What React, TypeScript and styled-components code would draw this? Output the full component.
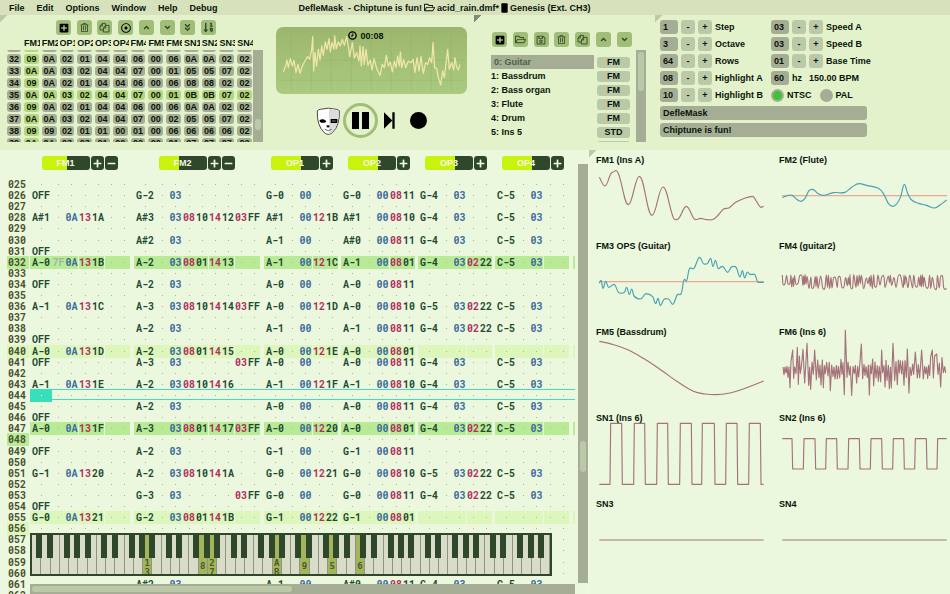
import React from "react";
import styled, { createGlobalStyle, css } from "styled-components";
import {
  FaPlusSquare,
  FaRegTrashAlt,
  FaRegDotCircle,
  FaAngleUp,
  FaAngleDown,
  FaAngleDoubleDown,
  FaSortNumericDown,
  FaRegFolderOpen,
  FaRegSave,
  FaPlus,
  FaMinus,
} from "react-icons/fa";

const c = {
  bar: "#d7e2bd",
  panel: "#e3f2ca",
  pattern: "#ebf8dd",
  btn: "#a1be78",
  field: "#a5ae94",
  soft: "#bcc9a9",
  ink: "#0a140a",
  dark: "#2f482c",
  note: "#1c4a34",
  inst: "#3a6a9c",
  fx: "#b02e60",
  label: "#48502f",
  dot: "#a5b593",
  cursor: "#3fdcc0",
};

const Global = createGlobalStyle`
  * { box-sizing: border-box; }
  body { margin: 0; background: ${c.pattern}; }
  body, button, input {
    font: bold 9px/12px "Liberation Sans", Arial, sans-serif;
    color: ${c.ink};
  }
  button { border: 0; padding: 0; background: none; }
`;

const Shell = styled.div`
  display: flex;
  flex-direction: column;
  height: 100vh;
  overflow: hidden;
`;

/* ---------- menu bar ---------- */

const MenuBar = styled.header`
  display: flex;
  align-items: center;
  flex: none;
  height: 15px;
  padding-left: 9px;
  background: ${c.bar};
  white-space: pre;
`;

const Menu = styled.nav`
  display: flex;
  gap: 12px;
`;

const Title = styled.div`
  display: flex;
  align-items: center;
  gap: 2px;
  margin-left: 81px;
`;

/* ---------- top panels ---------- */

const TopRow = styled.div`
  display: grid;
  grid-template-columns: 265fr 209fr 181fr 295fr;
  flex: none;
  min-height: 135px;
  background: ${c.panel};
`;

const corner = css<{ $corner?: string }>`
  ${(p) =>
    p.$corner &&
    `background: linear-gradient(135deg, ${p.$corner} 50%, transparent 51%) 0 0 / 7px 7px no-repeat;`}
`;

const Panel = styled.section`
  min-width: 0;
  ${corner}
`;

const Tools = styled.div`
  display: flex;
  justify-content: space-between;
`;

const ToolButton = styled.button`
  display: flex;
  align-items: center;
  justify-content: center;
  width: 15px;
  height: 15px;
  border-radius: 3px;
  background: ${c.btn};
  color: #34492a;
  font-size: 9px;
  &:first-child { color: #000; }
`;

const OrderTools = styled(Tools)`
  width: 160px;
  margin: 5px 0 0 56px;
`;

const Orders = styled.div`
  display: flex;
  gap: 1px;
  padding: 0 2px 0 7px;
`;

const OrderTable = styled.table`
  display: block;
  flex: 1;
  min-width: 0;
`;

const OrderHead = styled.thead`
  display: block;
  padding-top: 2px;
  height: 15px;
`;

const OrderBody = styled.tbody`
  display: block;
  height: 92px;
  overflow: hidden;
  & > tr:first-child { margin-top: -8px; }
`;

const OrderRow = styled.tr`
  display: grid;
  grid-template-columns: 14px repeat(13, minmax(0, 1fr));
  gap: 3px;
  margin-bottom: 2px;
`;

const OrderTitle = styled.th`
  padding: 0;
  margin-right: -1px;
  overflow: hidden;
  text-align: left;
`;

const OrderCell = styled.td<{ $on?: boolean }>`
  padding: 0;
  height: 10px;
  border-radius: 3px;
  line-height: 10px;
  text-align: center;
  background: ${(p) => (p.$on ? "#b3d67c" : c.field)};
`;

const VScroll = styled.div<{ $start: number; $size: number }>`
  flex: none;
  width: 10px;
  background: ${c.field};
  padding: 2px;
  &::before {
    content: "";
    display: block;
    height: ${(p) => p.$size}px;
    margin-top: ${(p) => p.$start}px;
    border-radius: 3px;
    background: ${c.soft};
  }
`;

const OrderScroll = styled(VScroll)`
  margin-top: 15px;
`;

/* ---------- transport ---------- */

const TransportPanel = styled(Panel)`
  padding: 12px 7px 0 11px;
`;

const Display = styled.div`
  display: grid;
  height: 67px;
  border-radius: 7px;
  background: linear-gradient(#9cb76d, #a9ca80);
  & > * { grid-area: 1 / 1; }
`;

const Clock = styled.div`
  display: flex;
  gap: 3px;
  justify-self: center;
  align-items: center;
  height: 17px;
  margin-right: 11px;
`;

const WaveSvg = styled.svg`
  width: 100%;
  height: 100%;
`;

const Transport = styled.div`
  display: flex;
  align-items: center;
  height: 35px;
  margin: 9px 0 0 40px;
`;

const TransportButton = styled.button<{ $gap?: number }>`
  display: flex;
  margin-left: ${(p) => p.$gap || 0}px;
`;

const PauseButton = styled(TransportButton)`
  align-items: center;
  justify-content: center;
  gap: 3px;
  width: 35px;
  height: 35px;
  border: 3px solid ${c.btn};
  border-radius: 50%;
  &::before, &::after {
    content: "";
    width: 7px;
    height: 17px;
    background: #000;
  }
`;

const RecordButton = styled(TransportButton)`
  width: 17px;
  height: 17px;
  border-radius: 50%;
  background: #000;
`;

/* ---------- instruments ---------- */

const InstrumentTools = styled(Tools)`
  width: 140px;
  margin: 17px 0 0 18px;
`;

const Instruments = styled.div`
  display: flex;
  gap: 6px;
  height: 92px;
  margin: 3px 9px 0 17px;
`;

const InstrumentList = styled.ul`
  flex: 1;
  margin: 0;
  padding: 5px 0 0;
  list-style: none;
  overflow: hidden;
`;

const InstrumentRow = styled.li`
  display: flex;
  align-items: center;
  gap: 3px;
  height: 14px;
`;

const InstrumentName = styled.button<{ $on?: boolean }>`
  flex: 1;
  height: 14px;
  text-align: left;
  ${(p) => p.$on && `padding-left: 3px; background: ${c.field}; color: #4a6148;`}
`;

const KindButton = styled.button`
  width: 33px;
  height: 11px;
  border-radius: 3px;
  line-height: 11px;
  background: ${c.soft};
`;

/* ---------- settings ---------- */

const Settings = styled(Panel)`
  padding: 5px 0 0 5px;
`;

const SettingsGrid = styled.div`
  display: grid;
  grid-template-columns: 108px 110px;
  gap: 3px;
`;

const Setting = styled.div`
  display: flex;
  align-items: center;
  gap: 3px;
  white-space: nowrap;
`;

const Field = styled.input`
  width: 18px;
  height: 14px;
  padding: 0 0 0 3px;
  border: 0;
  border-radius: 3px;
  background: ${c.field};
`;

const StepButton = styled.button`
  width: 14px;
  height: 14px;
  border-radius: 3px;
  background: ${c.soft};
`;

const Bpm = styled.output`
  margin-left: 4px;
`;

const Radio = styled.input`
  appearance: none;
  width: 13px;
  height: 13px;
  margin: 0;
  border: 2px solid ${c.field};
  border-radius: 50%;
  background: ${c.field};
  &:checked { background: #3fc33d; }
  label + & { margin-left: 5px; }
`;

const SongField = styled(Field)`
  display: block;
  width: 207px;
  margin-top: 3px;
  &:first-of-type { margin-top: 4px; }
`;

/* ---------- pattern editor ---------- */

const Bottom = styled.div`
  display: flex;
  flex: 1;
  min-height: 0;
`;

const PatternPane = styled.main`
  display: flex;
  flex: 0 0 62%;
  min-width: 0;
  border-right: 1px solid #f3fae8;
`;

const PatternMain = styled.div`
  position: relative;
  display: flex;
  flex-direction: column;
  flex: 1;
  min-width: 0;
  overflow: hidden;
`;

const columns = "30px 104px 130px repeat(4, 77px) 77px";

const ChannelBar = styled.div`
  display: grid;
  grid-template-columns: ${columns};
  flex: none;
  height: 28px;
  padding-top: 6px;
`;

const ChannelHead = styled.div<{ $wide?: boolean }>`
  display: flex;
  justify-content: center;
  gap: 1px;
  padding-right: ${(p) => (p.$wide ? 5 : 1)}px;
`;

const ChannelName = styled.button<{ $level: number }>`
  width: 48px;
  height: 14px;
  border-radius: 3px;
  color: #f4fbe6;
  background: linear-gradient(90deg, #c9f20c ${(p) => p.$level}%, ${c.dark} ${(p) => p.$level}%);
`;

const ChannelButton = styled.button`
  display: flex;
  align-items: center;
  justify-content: center;
  width: 13px;
  height: 14px;
  border-radius: 3px;
  font-size: 9px;
  color: #f4fbe6;
  background: ${c.dark};
`;

const PatternTable = styled.table`
  display: block;
  flex: 1;
  min-height: 0;
  margin-bottom: -6px;
  font: bold 10px/13px "Roboto Mono", "DejaVu Sans Mono", monospace;
`;

const PatternBody = styled.tbody`
  display: grid;
  grid-template-rows: repeat(38, minmax(0, 1fr));
  height: 100%;
`;

type Hl = 0 | 1 | 2;
const hlColor = ["transparent", "#dcf6bc", "#b9ea95"];

const PatternRow = styled.tr<{ $cursor?: boolean }>`
  display: grid;
  grid-template-columns: ${columns};
  ${(p) =>
    p.$cursor &&
    `background: linear-gradient(90deg, ${c.pattern} 30px, transparent 30px), linear-gradient(${c.cursor} 1px, transparent 1px, transparent calc(100% - 1px), ${c.cursor} calc(100% - 1px));`}
`;

const RowLabel = styled.th<{ $hl: Hl }>`
  padding: 0 0 0 1px;
  margin: 0 1px 0 7px;
  text-align: left;
  color: ${c.label};
  background: ${(p) => hlColor[p.$hl]};
`;

const Channel = styled.td`
  display: flex;
  padding: 0;
`;

const Cell = styled.span<{ $w: number; $hl: Hl; $color?: string; $gap?: boolean; $on?: boolean }>`
  flex: none;
  width: ${(p) => p.$w}px;
  display: flex;
  justify-content: center;
  color: ${(p) => p.$color || c.note};
  background: ${(p) => (p.$on ? "#37dfba" : hlColor[p.$hl])};
  ${(p) => p.$gap && p.$hl > 0 && `box-shadow: inset 1px 0 ${c.pattern};`}
`;

const Dot = styled.i<{ $light?: boolean }>`
  width: 1px;
  height: 1px;
  margin-top: 6px;
  background: ${(p) => (p.$light ? "#d9fff2" : c.dot)};
`;

const Piano = styled.div`
  position: absolute;
  left: 30px;
  right: 23px;
  bottom: 18px;
  display: flex;
  height: 43px;
  border: 2px solid ${c.dark};
  background: #d8dcc8;
  overflow: hidden;
`;

const WhiteKey = styled.div<{ $lit?: boolean; $black?: number; $single?: boolean }>`
  position: relative;
  flex: 1;
  min-width: 0;
  display: flex;
  flex-direction: column;
  align-items: center;
  padding-top: ${(p) => (p.$single ? 27 : 24)}px;
  border-right: 1px solid #8d967e;
  background: ${(p) => (p.$lit ? "#a3b55a" : "#d8dcc8")};
  color: #4a5a34;
  font: bold 9px/9px "DejaVu Sans Mono", monospace;
  ${(p) =>
    p.$black &&
    `&::after {
      content: "";
      position: absolute;
      z-index: 1;
      top: 0;
      left: ${p.$black}%;
      width: 6px;
      height: 23px;
      margin-left: -3px;
      background: ${c.dark};
    }`}
`;

const HScroll = styled.div`
  position: absolute;
  left: 30px;
  right: 0;
  bottom: 0;
  height: 10px;
  padding: 2px;
  background: ${c.field};
  &::before {
    content: "";
    display: block;
    width: 48%;
    height: 6px;
    border-radius: 3px;
    background: ${c.soft};
  }
`;

const PatternScroll = styled(VScroll)`
  margin: 14px 0 11px 3px;
`;

/* ---------- scopes ---------- */

const Scopes = styled.aside`
  flex: 1;
  min-width: 0;
  display: grid;
  grid-template-columns: 1fr 1fr;
  grid-auto-rows: 86px;
  column-gap: 15px;
  padding: 2px 3px 0 7px;
  ${corner}
`;

const Scope = styled.figure`
  display: grid;
  margin: 0;
  min-width: 0;
  & > * { grid-area: 1 / 1; }
`;

const ScopeTitle = styled.figcaption`
  padding-top: 2px;
`;

const ScopeSvg = styled.svg`
  width: calc(100% - 3px);
  height: 86px;
  margin-left: 3px;
  overflow: visible;
`;

/* ---------- data ---------- */

const menus = ["File", "Edit", "Options", "Window", "Help", "Debug"];
const orderNames = ["FM1", "FM2", "OP1", "OP2", "OP3", "OP4", "FM4", "FM5", "FM6", "SN1", "SN2", "SN3", "SN4"];
const orders: [string, string][] = [
  ["31", "0A 0A 03 02 04 04 07 00 02 05 05 07 02"],
  ["32", "09 0A 02 01 04 04 06 00 06 0A 0A 02 02"],
  ["33", "0A 0A 03 02 04 04 07 00 01 05 05 07 02"],
  ["34", "09 0A 02 01 04 04 06 00 06 08 08 02 02"],
  ["35", "0A 0A 03 02 04 04 07 00 01 0B 0B 07 02"],
  ["36", "09 0A 02 01 04 04 06 00 06 0A 0A 02 02"],
  ["37", "0A 0A 03 02 04 04 07 00 02 05 05 07 02"],
  ["38", "09 09 02 01 01 00 01 00 06 06 06 06 02"],
  ["39", "0A 0A 03 03 01 00 02 00 01 07 07 07 02"],
];

const instruments = [
  ["0: Guitar", "FM"],
  ["1: Bassdrum", "FM"],
  ["2: Bass organ", "FM"],
  ["3: Flute", "FM"],
  ["4: Drum", "FM"],
  ["5: Ins 5", "STD"],
  ["6: Ins 6", "STD"],
];

const channels = [
  { name: "FM1", fx: 2, level: 53, minus: true },
  { name: "FM2", fx: 3, level: 41, minus: true },
  { name: "OP1", fx: 1, level: 63 },
  { name: "OP2", fx: 1, level: 62 },
  { name: "OP3", fx: 1, level: 62 },
  { name: "OP4", fx: 1, level: 62 },
];

/* Cell text: note, volume, instrument, then one four-digit effect per slot; "." is empty. */
const rows: Record<number, string> = {
  26: "OFF|G-2 . 03|G-0 . 00|G-0 . 00 0811|G-4 . 03|C-5 . 03",
  28: "A#1 . 0A 131A|A#3 . 03 0810 1412 03FF|A#1 . 00 121B|A#1 . 00 0810|G-4 . 03|C-5 . 03",
  30: "|A#2 . 03|A-1 . 00|A#0 . 00 0811|G-4 . 03|C-5 . 03",
  31: "OFF",
  32: "A-0 7F 0A 131B|A-2 . 03 0801 1413|A-1 . 00 121C|A-1 . 00 0801|G-4 . 03 0222|C-5 . 03",
  34: "OFF|A-2 . 03|A-0 . 00|A-0 . 00 0811",
  36: "A-1 . 0A 131C|A-3 . 03 0810 1414 03FF|A-0 . 00 121D|A-0 . 00 0810|G-5 . 03 0222|C-5 . 03",
  38: "|A-2 . 03|A-1 . 00|A-1 . 00 0811|G-4 . 03 0222|C-5 . 03",
  39: "OFF",
  40: "A-0 . 0A 131D|A-2 . 03 0801 1415|A-0 . 00 121E|A-0 . 00 0801",
  41: "OFF|A-3 . 03 . . 03FF|A-0 . 00|A-0 . 00 0811|G-4 . 03|C-5 . 03",
  43: "A-1 . 0A 131E|A-2 . 03 0810 1416|A-1 . 00 121F|A-1 . 00 0810|G-4 . 03|C-5 . 03",
  45: "|A-2 . 03|A-0 . 00|A-0 . 00 0811|G-4 . 03|C-5 . 03",
  46: "OFF",
  47: "A-0 . 0A 131F|A-3 . 03 0801 1417 03FF|A-0 . 00 1220|A-0 . 00 0801|G-4 . 03 0222|C-5 . 03",
  49: "OFF|A-2 . 03|G-1 . 00|G-1 . 00 0811",
  51: "G-1 . 0A 1320|A-2 . 03 0810 141A|G-0 . 00 1221|G-0 . 00 0810|G-5 . 03 0222|C-5 . 03",
  53: "|G-3 . 03 . . 03FF|G-0 . 00|G-0 . 00 0811|G-4 . 03 0222|C-5 . 03",
  54: "OFF",
  55: "G-0 . 0A 1321|G-2 . 03 0801 141B|G-1 . 00 1222|G-1 . 00 0801",
  61: "|A#2 . 03|A-1 . 00|A#0 . 00 0811|G-4 . 03|C-5 . 03",
};
const rowHl: Record<number, Hl> = { 32: 2, 40: 1, 47: 2, 55: 1 };
const labelHl: Record<number, Hl> = { 32: 2, 40: 1, 48: 2, 56: 1 };

const blackOffset: Record<number, number> = { 0: 89, 1: 104, 3: 86, 4: 100, 5: 114 };
const litKeys: Record<number, string> = { 12: "13", 18: "8", 19: "27", 26: "AB", 29: "9", 32: "5", 35: "6" };

/* ---------- waveforms ---------- */

type Pt = [number, number];

const line = (pts: Pt[]) => "M" + pts.map((p) => p.join(" ")).join("L");

const smooth = (pts: Pt[]) => {
  const slope = (i: number) => {
    const q = pts[i];
    const l = pts[i - 1] || q;
    const r = pts[i + 1] || q;
    if (l !== q && r !== q && (q[1] - l[1]) * (r[1] - q[1]) <= 0) return 0;
    return (r[1] - l[1]) / (r[0] - l[0]);
  };
  let d = `M${pts[0].join(" ")}`;
  for (let i = 0; i < pts.length - 1; i++) {
    const [ax, ay] = pts[i];
    const [bx, by] = pts[i + 1];
    const h = (bx - ax) * 0.4;
    d += `C${(ax + h).toFixed(1)} ${(ay + slope(i) * h).toFixed(1)} ${(bx - h).toFixed(1)} ${(by - slope(i + 1) * h).toFixed(1)} ${bx} ${by}`;
  }
  return d;
};

const random = (seed: number) => () => {
  seed = (seed * 16807) % 2147483647;
  return seed / 2147483647;
};

const buzz = (): Pt[] => {
  const r = random(7919);
  const pts: Pt[] = [];
  let x = 577;
  let up = true;
  while (x < 1062) {
    const y = up ? 374 + r() * r() * 14 : 416 - r() * r() * 24;
    pts.push([Math.round(x), Math.round(y)]);
    if (r() > 0.8) {
      x += 6;
      pts.push([Math.round(x), Math.round(y + (up ? 3 : -3))]);
    }
    up = !up;
    x += 2 + r() * r() * 8;
  }
  pts.push([1070, 416]);
  return pts;
};

const noise = (): Pt[] => {
  const r = random(4241);
  const peaks: Pt[] = [[608, 600], [622, 592], [639, 598], [651, 580], [674, 600], [766, 540], [814, 582], [875, 600], [909, 580], [952, 597], [976, 606], [995, 600], [1027, 600], [1040, 612]];
  const pts: Pt[] = [];
  let up = true;
  let x = 579;
  while (x < 1069) {
    const peak = peaks.find((p) => Math.abs(p[0] - x) <= 2);
    if (peak) {
      pts.push(peak);
      up = false;
    } else {
      pts.push([x, Math.round(up ? 652 - r() * r() * 42 : 668 + r() * r() * 88)]);
      up = !up;
    }
    x += r() > 0.5 ? 3 : 4;
  }
  return pts;
};

const square = (edges: number[], first: number, second: number, start: number, end: number): Pt[] => {
  const pts: Pt[] = [[start, first]];
  let y = first;
  edges.forEach((x) => {
    pts.push([x, y]);
    y = y === first ? second : first;
    pts.push([x + 2, y]);
  });
  pts.push([end, y]);
  return pts;
};

const rose = "#a5717a";
const blue = "#45a0b4";
const L = 27;
const R = 576;

const scopes: { title: string; x: number; y: number; d: string; color: string; axis?: number }[] = [
  {
    title: "FM1 (Ins A)", x: L, y: 6, color: rose,
    d: smooth([[28, 82], [45, 108], [67, 67], [84, 68], [115, 164], [148, 79], [186, 196], [219, 111], [250, 203], [262, 208], [289, 169], [317, 209], [332, 205], [350, 209], [370, 208], [385, 195], [400, 178], [418, 173], [437, 157], [460, 146], [488, 139], [500, 155], [513, 172], [521, 169]]),
  },
  {
    title: "FM2 (Flute)", x: R, y: 6, color: blue, axis: 137,
    d: smooth([[577, 142], [603, 135], [620, 148], [633, 154], [645, 145], [657, 122], [667, 118], [685, 131], [700, 136], [730, 128], [765, 127], [785, 112], [807, 101], [830, 106], [865, 115], [880, 130], [895, 160], [908, 169], [920, 162], [932, 140], [943, 103], [953, 130], [965, 150], [985, 160], [1010, 166], [1033, 174], [1050, 165], [1070, 150]]),
  },
  {
    title: "FM3 OPS (Guitar)", x: L, y: 264, color: blue, axis: 395,
    d: smooth([[28, 400], [33, 391], [39, 415], [47, 394], [56, 412], [72, 403], [88, 429], [103, 427], [110, 412], [118, 434], [125, 417], [132, 438], [152, 447], [168, 431], [188, 440], [197, 461], [204, 445], [211, 467], [222, 448], [235, 447], [248, 463], [262, 434], [274, 430], [283, 388], [289, 393], [298, 357], [312, 355], [329, 322], [342, 342], [353, 340], [362, 325], [369, 350], [376, 331], [385, 356], [397, 349], [413, 367], [426, 350], [439, 353], [450, 381], [457, 362], [464, 384], [472, 366], [480, 373], [493, 373], [505, 397], [521, 397]]),
  },
  { title: "FM4 (guitar2)", x: R, y: 264, color: rose, d: smooth(buzz()) },
  {
    title: "FM5 (Bassdrum)", x: L, y: 522, color: rose,
    d: smooth([[28, 574], [60, 581], [110, 598], [160, 625], [213, 660], [265, 697], [310, 724], [345, 732], [377, 734], [420, 729], [465, 715], [521, 693]]),
  },
  { title: "FM6 (Ins 6)", x: R, y: 522, color: rose, d: line(noise()) },
  {
    title: "SN1 (Ins 6)", x: L, y: 120, color: rose,
    d: line(square([60, 95, 131, 164, 200, 233, 269, 304, 335, 373, 407, 441, 476, 511], 343, 160, 28, 521)),
  },
  {
    title: "SN2 (Ins 6)", x: R, y: 120, color: rose,
    d: line(square([606, 640, 675, 707, 740, 774, 808, 841, 875, 908, 941, 974, 1009, 1041], 206, 297, 577, 1070)),
  },
  { title: "SN3", x: L, y: 378, color: rose, d: "M28 510H521" },
  { title: "SN4", x: R, y: 378, color: rose, d: "M577 510H1070" },
];

const master: Pt[] = [[55, 217], [62, 200], [66, 182], [70, 205], [76, 178], [82, 200], [87, 183], [93, 220], [99, 195], [105, 222], [112, 200], [120, 185], [128, 172], [134, 180], [140, 150], [143, 112], [146, 215], [150, 160], [155, 200], [160, 150], [165, 182], [170, 140], [175, 168], [181, 128], [186, 150], [192, 118], [196, 158], [201, 130], [207, 150], [209, 110], [214, 148], [220, 128], [226, 140], [232, 120], [238, 138], [245, 112], [250, 140], [254, 172], [262, 130], [268, 176], [275, 160], [282, 185], [285, 140], [289, 200], [294, 142], [298, 195], [303, 150], [309, 198], [316, 182], [321, 212], [327, 178], [333, 200], [338, 215], [345, 228], [352, 195], [358, 205], [364, 168], [370, 200], [376, 188], [382, 218], [388, 185], [393, 205], [398, 170], [403, 200], [406, 158], [410, 205], [416, 180], [422, 205], [430, 185], [438, 190], [444, 180], [450, 220], [456, 175], [462, 215], [468, 172], [475, 222], [482, 190], [488, 195], [494, 175], [500, 190], [504, 130], [509, 205], [515, 208], [520, 235], [527, 257], [533, 215], [538, 235], [548, 150], [553, 210], [560, 190], [566, 212], [570, 175], [575, 205], [580, 212], [585, 195]];

/* ---------- icons ---------- */

const FilesIcon = () => (
  <svg width="11" height="11" viewBox="0 0 33 33" fill="none" stroke="currentColor" strokeWidth="2.8" strokeLinejoin="round">
    <path d="M13 24H3V12L10 4H19V10M10 4V12H3" />
    <path d="M13 18L20 10H30V30H13ZM20 10V18H13" />
  </svg>
);

const ChipIcon = () => (
  <svg width="7" height="10" viewBox="0 0 21 30">
    <rect x="1" y="1" width="19" height="28" rx="3" fill="#000" />
    <path d="M1 7v18M20 7v18" stroke="#4c5644" strokeWidth="2" strokeDasharray="2 2" />
  </svg>
);

const ClockIcon = () => (
  <svg width="9" height="9" viewBox="0 0 27 27" fill="none" stroke="#000">
    <circle cx="13.5" cy="13.5" r="11" strokeWidth="4" />
    <path d="M14.5 7V15H9" strokeWidth="3" />
  </svg>
);

const NextIcon = () => (
  <svg width="11" height="17" viewBox="0 0 33 51">
    <path d="M0 1L25 25.5L0 50ZM25 1h7v49h-7z" fill="#000" />
  </svg>
);

const MaskIcon = () => (
  <svg width="24" height="28" viewBox="151 316 72 84">
    <path d="M155 328Q157 324 164 323Q188 316 212 323Q219 324 221 328Q222 350 217 365Q212 382 200 393Q188 403 176 393Q164 382 159 365Q154 350 155 328Z" fill="#fff" stroke="#2c2c2c" strokeWidth="2.6" />
    <path d="M190 321Q204 321 218 327Q220 350 215 364Q210 381 199 391Q194 396 190 396Z" fill="#dcdcdc" />
    <path d="M161 357Q166 352 172 353Q180 354 182 360Q174 365 167 363Q163 361 161 357Z" fill="#000" />
    <rect x="195" y="352" width="20" height="12" fill="#000" />
    <path d="M199 358h11" stroke="#ccc" strokeWidth="2" />
    <path d="M183 371h8v6h-8z" fill="#000" />
    <path d="M177 383Q188 391 198 383" fill="none" stroke="#222" strokeWidth="2" />
  </svg>
);

const orderTools: [string, React.ReactNode][] = [
  ["Add", <FaPlusSquare size={10} />],
  ["Delete", <FaRegTrashAlt />],
  ["Duplicate", <FilesIcon />],
  ["Target", <FaRegDotCircle size={10} color="#000" />],
  ["Up", <FaAngleUp />],
  ["Down", <FaAngleDown />],
  ["To bottom", <FaAngleDoubleDown />],
  ["Sort", <FaSortNumericDown size={11} />],
];

const instrumentTools: [string, React.ReactNode][] = [
  ["New", <FaPlusSquare size={10} />],
  ["Open", <FaRegFolderOpen size={11} />],
  ["Save", <FaRegSave size={10} />],
  ["Delete", <FaRegTrashAlt />],
  ["Duplicate", <FilesIcon />],
  ["Up", <FaAngleUp />],
  ["Down", <FaAngleDown />],
];

/* ---------- parts ---------- */

const Stepper = ({ id, label, value }: { id: string; label: string; value: string }) => (
  <Setting>
    <Field id={id} defaultValue={value} />
    <StepButton aria-label={`${label} down`}>-</StepButton>
    <StepButton aria-label={`${label} up`}>+</StepButton>
    <label htmlFor={id}>{label}</label>
  </Setting>
);

const ChannelCells = ({ text, fx, hl, cursor }: { text: string; fx: number; hl: Hl; cursor?: boolean }) => {
  const [note, vol, inst, ...effects] = text.split(" ");
  const show = (v?: string, light?: boolean) => (v && v !== "." ? v : <Dot $light={light} />);
  return (
    <Channel>
      <Cell $w={22} $hl={hl} $on={cursor}>{show(note, cursor)}</Cell>
      <Cell $w={13} $hl={hl} $color="#a3b5a5">{show(vol)}</Cell>
      <Cell $w={13} $hl={hl} $color={c.inst}>{show(inst)}</Cell>
      {Array.from({ length: fx }, (_, i) => {
        const e = effects[i] && effects[i] !== "." ? effects[i] : undefined;
        return (
          <React.Fragment key={i}>
            <Cell $w={14} $hl={hl} $gap $color={c.fx}>{show(e?.slice(0, 2))}</Cell>
            <Cell $w={12} $hl={hl}>{show(e?.slice(2))}</Cell>
          </React.Fragment>
        );
      })}
    </Channel>
  );
};

const pad = (n: number) => String(n).padStart(3, "0");

export default function App() {
  return (
    <Shell>
      <Global />
      <MenuBar>
        <Menu>
          {menus.map((m) => (
            <button key={m}>{m}</button>
          ))}
        </Menu>
        <Title>
          <span>{"DefleMask  - Chiptune is fun!"}</span>
          <FaRegFolderOpen size={11} />
          <span>acid_rain.dmf*</span>
          <ChipIcon />
          <span>Genesis (Ext. CH3)</span>
        </Title>
      </MenuBar>

      <TopRow>
        <Panel $corner="#bccaa8">
          <OrderTools>
            {orderTools.map(([n, icon]) => (
              <ToolButton key={n} aria-label={n}>{icon}</ToolButton>
            ))}
          </OrderTools>
          <Orders>
            <OrderTable>
              <OrderHead>
                <OrderRow>
                  <OrderTitle />
                  {orderNames.map((n) => (
                    <OrderTitle key={n}>{n}</OrderTitle>
                  ))}
                </OrderRow>
              </OrderHead>
              <OrderBody>
                {orders.map(([n, values]) => (
                  <OrderRow key={n}>
                    <OrderCell>{n}</OrderCell>
                    {values.split(" ").map((v, i) => (
                      <OrderCell key={i} $on={i === 0 || n === "35"}>{v}</OrderCell>
                    ))}
                  </OrderRow>
                ))}
              </OrderBody>
            </OrderTable>
            <OrderScroll $start={67} $size={11} />
          </Orders>
        </Panel>

        <TransportPanel>
          <Display>
            <WaveSvg viewBox="33 83 573 201" preserveAspectRatio="none">
              <path d="M79 100V276M139 100V276M199 100V276M259 100V276M319 100V276M379 100V276M439 100V276M499 100V276M559 100V276M45 243H596M45 183H596" stroke="#8fae68" strokeOpacity="0.4" strokeWidth="2.5" />
              <path d={line(master)} fill="none" stroke="#efe7a6" strokeWidth="3.8" strokeLinejoin="round" />
            </WaveSvg>
            <Clock>
              <ClockIcon />
              <time>00:08</time>
            </Clock>
          </Display>
          <Transport>
            <TransportButton aria-label="About"><MaskIcon /></TransportButton>
            <PauseButton aria-label="Pause" $gap={3} />
            <TransportButton aria-label="Next" $gap={6}><NextIcon /></TransportButton>
            <RecordButton aria-label="Record" $gap={15} />
          </Transport>
        </TransportPanel>

        <Panel $corner="#7f8a74">
          <InstrumentTools>
            {instrumentTools.map(([n, icon]) => (
              <ToolButton key={n} aria-label={n}>{icon}</ToolButton>
            ))}
          </InstrumentTools>
          <Instruments>
            <InstrumentList>
              {instruments.map(([n, kind], i) => (
                <InstrumentRow key={n}>
                  <InstrumentName $on={i === 0}>{n}</InstrumentName>
                  <KindButton>{kind}</KindButton>
                </InstrumentRow>
              ))}
            </InstrumentList>
            <VScroll $start={0} $size={39} />
          </Instruments>
        </Panel>

        <Settings $corner="#bccaa8">
          <SettingsGrid>
            <Stepper id="step" label="Step" value="1" />
            <Stepper id="speed-a" label="Speed A" value="03" />
            <Stepper id="octave" label="Octave" value="3" />
            <Stepper id="speed-b" label="Speed B" value="03" />
            <Stepper id="rows" label="Rows" value="64" />
            <Stepper id="base" label="Base Time" value="01" />
            <Stepper id="hl-a" label="Highlight A" value="08" />
            <Setting>
              <Field id="hz" defaultValue="60" />
              <label htmlFor="hz">hz</label>
              <Bpm>150.00 BPM</Bpm>
            </Setting>
            <Stepper id="hl-b" label="Highlight B" value="10" />
            <Setting>
              <Radio type="radio" name="clock" id="ntsc" defaultChecked />
              <label htmlFor="ntsc">NTSC</label>
              <Radio type="radio" name="clock" id="pal" />
              <label htmlFor="pal">PAL</label>
            </Setting>
          </SettingsGrid>
          <SongField aria-label="Author" defaultValue="DefleMask" />
          <SongField aria-label="Song name" defaultValue="Chiptune is fun!" />
        </Settings>
      </TopRow>

      <Bottom>
        <PatternPane>
          <PatternMain>
            <ChannelBar>
              <span />
              {channels.map((ch) => (
                <ChannelHead key={ch.name} $wide={ch.minus}>
                  <ChannelName $level={ch.level}>{ch.name}</ChannelName>
                  <ChannelButton aria-label={`${ch.name} add effect`}><FaPlus /></ChannelButton>
                  {ch.minus && (
                    <ChannelButton aria-label={`${ch.name} remove effect`}><FaMinus /></ChannelButton>
                  )}
                </ChannelHead>
              ))}
            </ChannelBar>
            <PatternTable>
              <PatternBody>
                {Array.from({ length: 38 }, (_, i) => i + 25).map((n) => {
                  const cells = (rows[n] || "").split("|");
                  const hl = rowHl[n] || 0;
                  return (
                    <PatternRow key={n} $cursor={n === 44}>
                      <RowLabel $hl={labelHl[n] || 0}>{pad(n)}</RowLabel>
                      {channels.map((ch, i) => (
                        <ChannelCells
                          key={ch.name}
                          text={cells[i] || ""}
                          fx={ch.fx}
                          hl={hl}
                          cursor={n === 44 && i === 0}
                        />
                      ))}
                      <Channel><Cell $w={22} $hl={hl} $gap /></Channel>
                    </PatternRow>
                  );
                })}
              </PatternBody>
            </PatternTable>
            <Piano>
              {Array.from({ length: 56 }, (_, i) => (
                <WhiteKey
                  key={i}
                  $lit={i in litKeys}
                  $black={blackOffset[i % 7]}
                  $single={(litKeys[i] || "").length === 1}
                >
                  {(litKeys[i] || "").split("").map((t) => (
                    <span key={t}>{t}</span>
                  ))}
                </WhiteKey>
              ))}
            </Piano>
            <HScroll />
          </PatternMain>
          <PatternScroll $start={275} $size={31} />
        </PatternPane>

        <Scopes $corner="#bccaa8">
          {scopes.map((s) => (
            <Scope key={s.title}>
              <ScopeSvg viewBox={`${s.x} ${s.y} 495 258`} preserveAspectRatio="none" fill="none">
                {s.axis && <path d={`M${s.x} ${s.axis}h495`} stroke="#eda794" strokeWidth="3.6" />}
                <path d={s.d} stroke={s.color} strokeWidth="3.4" strokeLinejoin="round" />
              </ScopeSvg>
              <ScopeTitle>{s.title}</ScopeTitle>
            </Scope>
          ))}
        </Scopes>
      </Bottom>
    </Shell>
  );
}
